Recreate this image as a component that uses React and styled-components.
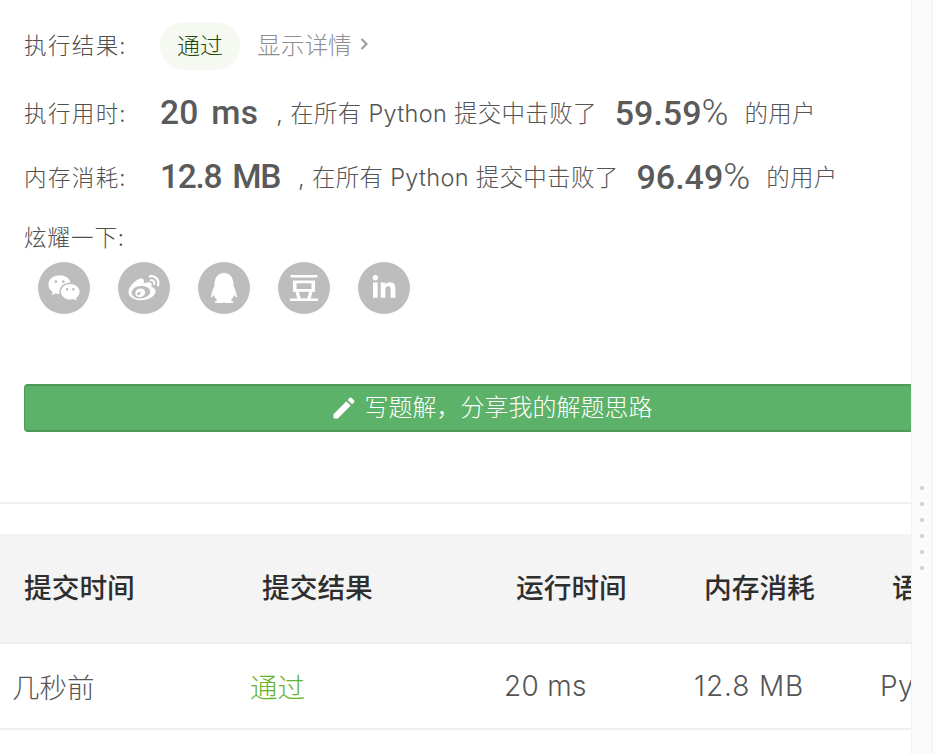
import React from "react";
import styled, { createGlobalStyle } from "styled-components";
import { RiWechatFill, RiWeiboFill, RiQqFill } from "react-icons/ri";
import { FaLinkedinIn } from "react-icons/fa";
import { SiDouban } from "react-icons/si";
import { MdEdit } from "react-icons/md";

const Global = createGlobalStyle`
  html, body { margin: 0; padding: 0; background: #fff; }
  body { font-family: "Noto Sans CJK SC", "Noto Sans", sans-serif; font-weight: 300; width: 936px; height: 754px; overflow: hidden; }
`;
const Page = styled.div`
  display: flex;
  width: 936px;
  height: 754px;
  overflow: hidden;
`;
const Main = styled.main`
  width: 911px;
  flex: none;
  overflow: hidden;
`;
const Side = styled.aside`
  width: 20px;
  flex: none;
  background: #fafafa;
  border-left: 1px solid #f2f2f2;
  border-right: 1px solid #f2f2f2;
  display: flex;
  flex-direction: column;
  align-items: center;
  gap: 12px;
  padding-top: 486px;
`;
const Dot = styled.span`
  width: 4px;
  height: 4px;
  border-radius: 50%;
  background: #cfcfcf;
`;
const Result = styled.section`
  padding: 0 0 0 24px;
`;
const Row = styled.div`
  display: flex;
  align-items: center;
  height: 64px;
  color: #666;
  font-size: 23.5px;
  white-space: nowrap;
`;
const Label = styled.span`
  width: 136px;
  flex: none;
  font-size: 22.5px;
  letter-spacing: 1.4px;
  color: #4f4f4f;
`;
const StatusRow = styled(Row)`
  height: 68px;
  padding-top: 12px;
  & > ${Label} {
    margin-bottom: 4px;
  }
`;
const Pill = styled.span`
  width: 80px;
  height: 48px;
  box-sizing: border-box;
  padding-bottom: 4px;
  border-radius: 24px;
  background: #f5f9f2;
  color: #1f4a0a;
  font-size: 23px;
  display: flex;
  align-items: center;
  justify-content: center;
`;
const Detail = styled.span`
  margin: 0 0 4px 17px;
  color: #8f8f8f;
  font-size: 23.7px;
  display: flex;
  align-items: center;
  gap: 8px;
`;
const Big = styled.strong`
  font-family: "Roboto", sans-serif;
  font-weight: 500;
  font-size: 33.5px;
  letter-spacing: ${(p) => p.$ls}px;
  word-spacing: 4px;
  color: #5a5a5a;
  margin-right: 18px;
`;
const Plain = styled.span`
  font-family: "Inter", "Noto Sans CJK SC", sans-serif;
  font-weight: 300;
  letter-spacing: 0.3px;
  color: #555;
`;
const Pct = styled.span`
  font-family: "Roboto", sans-serif;
  font-size: 34px;
  color: #5a5a5a;
  margin: 0 16px 0 18px;
`;
const Num = styled.b`
  font-weight: 500;
`;
const Pc = styled.span`
  font-weight: 300;
  font-size: 36.5px;
`;
const Share = styled.div`
  font-size: 22.5px;
  color: #4f4f4f;
  letter-spacing: 1px;
  height: 34px;
  margin-top: 11px;
  display: flex;
  align-items: center;
`;
const Icons = styled.div`
  display: flex;
  gap: 28px;
  padding: 9px 0 0 14px;
`;
const Circle = styled.a`
  width: 52px;
  height: 52px;
  border-radius: 50%;
  background: #bdbdbd;
  color: #fff;
  display: flex;
  align-items: center;
  justify-content: center;
  font-size: ${(p) => p.$s}px;
`;
const WriteBtn = styled.button`
  display: flex;
  align-items: center;
  justify-content: center;
  gap: 7px;
  width: 950px;
  height: 48px;
  margin: 70px 0 0;
  padding: 0 16px 0 0;
  background: #5cb268;
  border: 1px solid #4f9a5a;
  border-top-width: 2px;
  border-bottom-width: 2px;
  border-radius: 4px;
  color: #fff;
  font-family: inherit;
  font-weight: 300;
  font-size: 24px;
  box-sizing: border-box;
`;
const Caption = styled.span`
  margin-bottom: 5px;
`;
const Divider = styled.hr`
  margin: 70px 0 0;
  border: 0;
  height: 2px;
  background: #f0f0f0;
`;
const Grid = styled.div`
  display: grid;
  grid-template-columns: 238px 254px 188px 188px 100px;
  align-items: center;
  white-space: nowrap;
  box-sizing: border-box;
  border-bottom: 2px solid #efefef;
`;
const Head = styled(Grid)`
  margin-top: 30px;
  height: 110px;
  padding: 0 0 4px 24px;
  background: #f4f4f4;
  font-size: 27.7px;
  font-weight: 500;
  color: #2e2e2e;
`;
const Body = styled(Grid)`
  height: 86px;
  padding: 0 0 1px 12px;
  font-size: 27.5px;
  color: #555;
`;
const Latin = styled.span`
  font-family: "Inter", sans-serif;
  font-weight: 300;
  font-size: 28px;
  letter-spacing: ${(p) => p.$ls || 0.3}px;
  margin-left: ${(p) => p.$shift || 0}px;
`;
const Ok = styled.span`
  color: #66b32e;
`;

function Stat({ label, value, pct, ls }) {
  return (
    <Row>
      <Label>{label}:</Label>
      <Big $ls={ls}>{value}</Big>
      <Plain>, 在所有 Python 提交中击败了</Plain>
      <Pct><Num>{pct}</Num><Pc>%</Pc></Pct>
      <Plain>的用户</Plain>
    </Row>
  );
}

export default function App() {
  return (
    <Page>
      <Global />
      <Main>
        <Result>
          <StatusRow>
            <Label>执行结果:</Label>
            <Pill>通过</Pill>
            <Detail>
              显示详情
              <svg width="9" height="14" viewBox="0 0 9 14" fill="none" stroke="#999" strokeWidth="2"><path d="M1.5 2l5 5-5 5" /></svg>
            </Detail>
          </StatusRow>
          <Stat ls={0.3} label="执行用时" value="20 ms" pct="59.59" />
          <Stat ls={-1.3} label="内存消耗" value="12.8 MB" pct="96.49" />
          <Share>炫耀一下:</Share>
          <Icons>
            <Circle $s={34}><RiWechatFill /></Circle>
            <Circle $s={34}><RiWeiboFill /></Circle>
            <Circle $s={36}><RiQqFill /></Circle>
            <Circle $s={28}><SiDouban /></Circle>
            <Circle $s={26}><FaLinkedinIn /></Circle>
          </Icons>
          <WriteBtn>
            <MdEdit size={28} />
            <Caption>写题解{"\uFF0C"}分享我的解题思路</Caption>
          </WriteBtn>
        </Result>
        <Divider />
        <Head>
          <span>提交时间</span><span>提交结果</span><span>运行时间</span><span>内存消耗</span><span>语言</span>
        </Head>
        <Body>
          <span>几秒前</span><Ok>通过</Ok><Latin>20 ms</Latin><Latin $ls={0.9} $shift={2}>12.8 MB</Latin><Latin>Python</Latin>
        </Body>
      </Main>
      <Side>
        {[0, 1, 2, 3, 4, 5].map((i) => <Dot key={i} />)}
      </Side>
    </Page>
  );
}
